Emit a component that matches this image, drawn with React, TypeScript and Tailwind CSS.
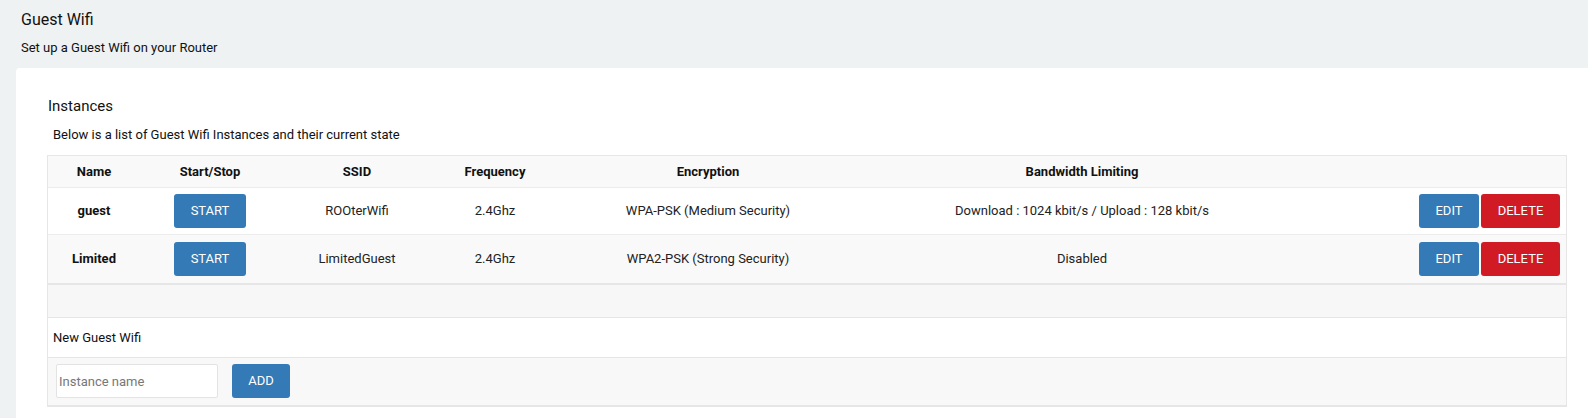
import React from "react";

const cols = "grid grid-cols-[92px_140px_154px_122px_304px_444px_1fr] items-center";

function Btn({ label, color, w }: { label: string; color: "blue" | "red"; w: string }) {
  return (
    <button
      className={
        (color === "blue" ? "bg-[#337ab7]" : "bg-[#d01b24]") +
        " " +
        w +
        " h-[34px] rounded-[3px] text-white text-[13px] leading-[34px] text-center"
      }
    >
      {label}
    </button>
  );
}

function Row({
  name,
  ssid,
  enc,
  bw,
  bg,
  h,
}: {
  name: string;
  ssid: string;
  enc: string;
  bw: string;
  bg: string;
  h: string;
}) {
  return (
    <div className={cols + " " + bg + " " + h + " border-t border-[#ececec] text-[13px] text-[#222]"}>
      <div className="text-center font-bold text-[#111]">{name}</div>
      <div className="flex justify-center">
        <Btn label="START" color="blue" w="w-[72px]" />
      </div>
      <div className="text-center">{ssid}</div>
      <div className="text-center">2.4Ghz</div>
      <div className="text-center">{enc}</div>
      <div className="text-center">{bw}</div>
      <div className="flex justify-end gap-[2px] pr-[6px]">
        <Btn label="EDIT" color="blue" w="w-[60px]" />
        <Btn label="DELETE" color="red" w="w-[79px]" />
      </div>
    </div>
  );
}

export default function App() {
  return (
    <div className="min-h-[418px] bg-[#eef2f3] font-['Roboto',sans-serif] text-[#111] overflow-hidden">
      <div className="pt-[8px] pl-[21px]">
        <div className="text-[16px] leading-[24px]">Guest Wifi</div>
        <div className="mt-[6px] text-[13px] leading-[20px]">Set up a Guest Wifi on your Router</div>
      </div>
      <div className="mt-[10px] ml-[16px] bg-white rounded-tl-[4px] pt-[28px] pl-[31px] pr-[21px] pb-[12px]">
        <div className="pl-[1px] text-[15px] leading-[20px]">Instances</div>
        <div className="mt-[9px] pl-[6px] text-[13px] leading-[20px]">
          Below is a list of Guest Wifi Instances and their current state
        </div>
        <div className="mt-[10px] border border-[#e6e6e6] border-b-2">
          <div className={cols + " h-[31px] bg-[#f9f9f9] text-[13px] font-bold text-[#111]"}>
            <div className="text-center">Name</div>
            <div className="text-center">Start/Stop</div>
            <div className="text-center">SSID</div>
            <div className="text-center">Frequency</div>
            <div className="text-center">Encryption</div>
            <div className="text-center">Bandwidth Limiting</div>
            <div />
          </div>
          <Row
            name="guest"
            ssid="ROOterWifi"
            enc="WPA-PSK (Medium Security)"
            bw="Download : 1024 kbit/s / Upload : 128 kbit/s"
            bg="bg-white"
            h="h-[47px]"
          />
          <Row
            name="Limited"
            ssid="LimitedGuest"
            enc="WPA2-PSK (Strong Security)"
            bw="Disabled"
            bg="bg-[#f9f9f9]"
            h="h-[49px]"
          />
          <div className="h-[34px] bg-[#f7f7f7] border-t-2 border-[#e6e6e6]" />
          <div className="h-[40px] bg-white border-t border-[#e6e6e6] flex items-center pl-[5px] text-[13px] text-[#111]">
            New Guest Wifi
          </div>
          <div className="h-[48px] bg-[#f8f8f8] border-t border-[#e6e6e6] flex items-start pt-[6px] pl-[8px] gap-[14px]">
            <input
              placeholder="Instance name"
              className="w-[162px] h-[34px] bg-white border border-[#e3e3e3] rounded-[2px] px-[2px] text-[13px] placeholder:text-[#777] outline-none"
            />
            <Btn label="ADD" color="blue" w="w-[58px]" />
          </div>
        </div>
      </div>
    </div>
  );
}
